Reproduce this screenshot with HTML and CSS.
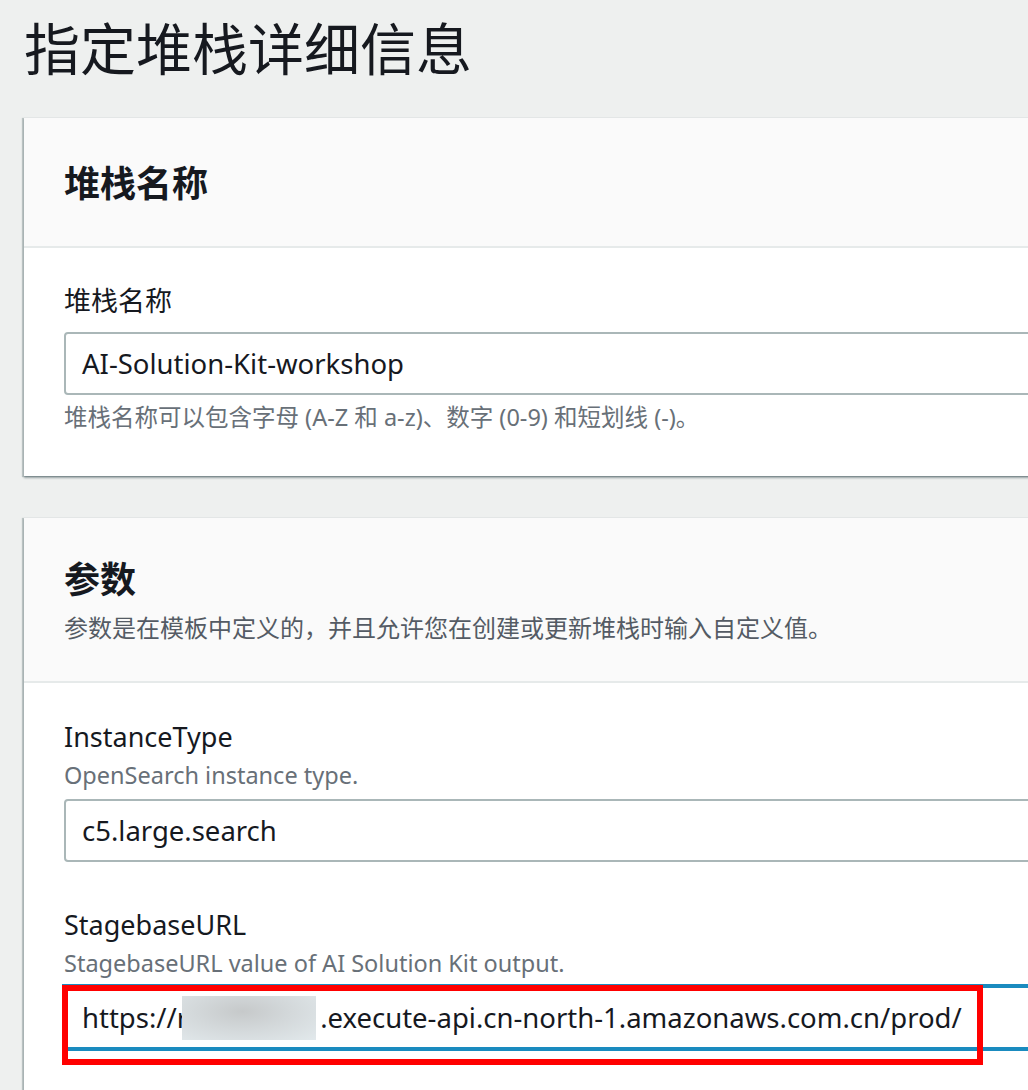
FILE: index.html
```html
<!DOCTYPE html>
<html lang="zh-CN">
<head>
<meta charset="utf-8">
<title>指定堆栈详细信息</title>
<link rel="stylesheet" href="styles.css">
</head>
<body>
<main class="page">
  <h1 class="page-title">指定堆栈详细信息</h1>

  <section class="panel">
    <header class="panel-header">
      <h2 class="panel-title">堆栈名称</h2>
    </header>
    <div class="panel-body">
      <div class="field">
        <label class="field-label">堆栈名称</label>
        <div class="input">AI-Solution-Kit-workshop</div>
        <p class="field-hint">堆栈名称可以包含字母 (A-Z 和 a-z)、数字 (0-9) 和短划线 (-)。</p>
      </div>
    </div>
  </section>

  <section class="panel panel-params">
    <header class="panel-header">
      <h2 class="panel-title">参数</h2>
      <p class="panel-desc">参数是在模板中定义的，并且允许您在创建或更新堆栈时输入自定义值。</p>
    </header>
    <div class="panel-body">
      <div class="field">
        <label class="field-label">InstanceType</label>
        <p class="field-desc">OpenSearch instance type.</p>
        <div class="input">c5.large.search</div>
      </div>
      <div class="field field-url">
        <label class="field-label">StagebaseURL</label>
        <p class="field-desc">StagebaseURL value of AI Solution Kit output.</p>
        <div class="input input-focus">https://r<span class="blur"></span>.execute-api.cn-north-1.amazonaws.com.cn/prod/<span class="highlight"></span></div>
      </div>
    </div>
  </section>
</main>
</body>
</html>
```
FILE: styles.css
```css
* { box-sizing: border-box; }

html, body {
  margin: 0;
  padding: 0;
  background: #eef0ef;
  overflow: hidden;
}

body {
  font-family: "Noto Sans", "Noto Sans CJK SC", sans-serif;
  color: #16191f;
}

.page {
  width: 1140px;
  padding: 12px 0 0 24px;
  display: flex;
  flex-direction: column;
}

.page-title {
  margin: 0 0 38px 0;
  font-family: "Noto Sans CJK SC", sans-serif;
  font-weight: 400;
  font-size: 56px;
  line-height: 67px;
  color: #16191f;
}

.panel {
  background: #fff;
  border-top: 1px solid #e3e6e6;
  box-shadow: 0 2px 2px 0 rgba(0, 28, 36, 0.35), -2px 1px 1px 0 rgba(0, 28, 36, 0.2);
  margin-bottom: 41px;
}

.panel-header {
  background: #fafafa;
  border-bottom: 2px solid #e6eaea;
  padding: 41px 40px 43px;
}

.panel-params .panel-header {
  padding: 37px 40px 38px;
}

.panel-title {
  margin: 0;
  font-family: "Noto Sans CJK SC", sans-serif;
  font-weight: 700;
  font-size: 36px;
  line-height: 44px;
  color: #16191f;
}

.panel-desc {
  margin: 12px 0 0;
  font-family: "Noto Sans CJK SC", sans-serif;
  font-size: 24px;
  line-height: 32px;
  color: #545b64;
}

.panel-body {
  padding: 36px 40px 44px;
  display: flex;
  flex-direction: column;
  gap: 46px;
}

.panel-params .panel-body {
  padding-top: 37px;
}

.field {
  display: flex;
  flex-direction: column;
}

.field-label {
  font-size: 27px;
  line-height: 34px;
  color: #16191f;
  margin-bottom: 14px;
}

.panel-params .field-label {
  margin-bottom: 6px;
}

.field-desc {
  margin: 0 0 9px;
  font-size: 23.5px;
  line-height: 30px;
  color: #687078;
}

.field-url .field-desc {
  margin-bottom: 8px;
}

.field-hint {
  margin: 7px 0 0;
  font-size: 23.5px;
  line-height: 30px;
  color: #687078;
}

.input {
  position: relative;
  height: 63px;
  border: 2px solid #aab7b8;
  border-radius: 4px;
  padding: 0 16px;
  display: flex;
  align-items: center;
  font-size: 27.5px;
  color: #16191f;
  white-space: nowrap;
}

.input-focus {
  border-color: #1a8bbf;
  box-shadow: 0 0 0 2px #1a8bbf;
  border-radius: 0;
}

.blur {
  display: inline-block;
  width: 134px;
  height: 44px;
  margin-left: -6px;
  margin-right: 4px;
  background: radial-gradient(ellipse at 45% 35%, #c6c9ca 0%, #d3d8da 45%, #e2e9ec 100%);
}

.highlight {
  position: absolute;
  left: -4px;
  top: -3px;
  width: 921px;
  height: 80px;
  border: 6px solid #ff0000;
}
```
